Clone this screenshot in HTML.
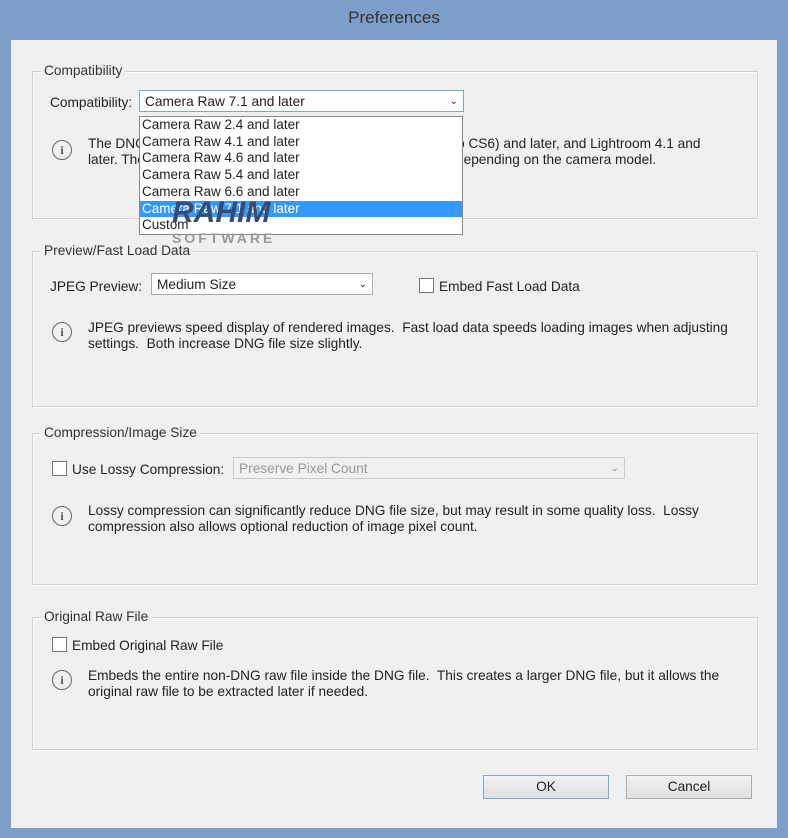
<html><head><style>
body{margin:0;width:788px;height:838px;background:#7b9fc9;font-family:"Liberation Sans",sans-serif;font-size:13.7px;color:#222;position:relative;overflow:hidden}
.a{position:absolute}
.title{left:0;top:8px;width:788px;text-align:center;font-size:17px;color:#333}
.content{left:11px;top:40px;width:766px;height:788px;background:#f0f0f0}
.grp{position:absolute;border:1px solid #d0d0d0;box-shadow:inset 1px 1px 0 #fff,1px 1px 0 #fff}
.leg{position:absolute;background:#f0f0f0;padding:0 3px;top:-9px;left:8px;color:#333}
.info{position:absolute;width:18px;height:18px;border:1px solid #666;border-radius:50%;text-align:center;font:bold 12px "Liberation Serif",serif;line-height:18px;color:#555}
.sel{position:absolute;background:#fff;border:1px solid #aaa;height:22px;line-height:22px;padding-left:5px;box-sizing:border-box}
.cb{position:absolute;width:13px;height:13px;border:1px solid #777;background:#fff}
.btn{position:absolute;height:24px;border:1px solid #acacac;background:linear-gradient(#f2f2f2,#e0e0e0);text-align:center;line-height:22px;box-sizing:border-box}
.p{position:absolute;line-height:16px}
</style></head><body>
<div class="a title">Preferences</div>
<div class="a content"></div>
<div class="grp" style="left:32px;top:71px;width:724px;height:146px"><div class="leg">Compatibility</div></div>
<div class="a" style="left:50px;top:95px">Compatibility:</div>
<div class="sel" style="left:139px;top:90px;width:325px;border-color:#7ea7d8">Camera Raw 7.1 and later<span style="position:absolute;right:5px;font-size:10px">&#8964;</span></div>
<div class="info" style="left:52px;top:140px">i</div>
<div class="p" style="left:88px;top:136px">The DNG file will be readable by Camera Raw 7.1 (Photoshop CS6) and later, and Lightroom 4.1 and<br>later. The DNG file will often be readable by earlier versions, depending on the camera model.</div>
<div class="a" style="left:139px;top:116px;width:324px;height:119px;background:#fff;border:1px solid #888;line-height:16.7px;box-sizing:border-box;padding-left:2px;font-size:13.5px">
Camera Raw 2.4 and later<br>Camera Raw 4.1 and later<br>Camera Raw 4.6 and later<br>Camera Raw 5.4 and later<br>Camera Raw 6.6 and later<br><div style="background:#3399ff;color:#fff;margin-left:-2px;padding-left:2px">Camera Raw 7.1 and later</div>Custom</div>
<div class="a" style="left:172px;top:196px;font:italic bold 30px 'Liberation Sans',sans-serif;color:#3a4c6e">RAHIM</div>
<div class="a" style="left:172px;top:230px;font:bold 14px 'Liberation Sans',sans-serif;letter-spacing:3px;color:#999">SOFTWARE</div>

<div class="grp" style="left:32px;top:251px;width:724px;height:154px"><div class="leg">Preview/Fast Load Data</div></div>
<div class="a" style="left:50px;top:279px">JPEG Preview:</div>
<div class="sel" style="left:151px;top:273px;width:222px">Medium Size<span style="position:absolute;right:5px;font-size:10px">&#8964;</span></div>
<div class="cb" style="left:419px;top:278px"></div>
<div class="a" style="left:439px;top:279px">Embed Fast Load Data</div>
<div class="info" style="left:52px;top:322px">i</div>
<div class="p" style="left:88px;top:320px">JPEG previews speed display of rendered images.&nbsp; Fast load data speeds loading images when adjusting<br>settings.&nbsp; Both increase DNG file size slightly.</div>

<div class="grp" style="left:32px;top:433px;width:724px;height:150px"><div class="leg">Compression/Image Size</div></div>
<div class="cb" style="left:52px;top:461px"></div>
<div class="a" style="left:72px;top:462px">Use Lossy Compression:</div>
<div class="sel" style="left:233px;top:457px;width:392px;background:#f0f0f0;border-color:#ccc;color:#999">Preserve Pixel Count<span style="position:absolute;right:5px;font-size:10px">&#8964;</span></div>
<div class="info" style="left:52px;top:506px">i</div>
<div class="p" style="left:88px;top:503px">Lossy compression can significantly reduce DNG file size, but may result in some quality loss.&nbsp; Lossy<br>compression also allows optional reduction of image pixel count.</div>

<div class="grp" style="left:32px;top:617px;width:724px;height:131px"><div class="leg">Original Raw File</div></div>
<div class="cb" style="left:52px;top:637px"></div>
<div class="a" style="left:72px;top:638px">Embed Original Raw File</div>
<div class="info" style="left:52px;top:670px">i</div>
<div class="p" style="left:88px;top:668px">Embeds the entire non-DNG raw file inside the DNG file.&nbsp; This creates a larger DNG file, but it allows the<br>original raw file to be extracted later if needed.</div>

<div class="btn" style="left:483px;top:775px;width:126px;border-color:#7ea7d8">OK</div>
<div class="btn" style="left:626px;top:775px;width:126px">Cancel</div>
</body></html>
